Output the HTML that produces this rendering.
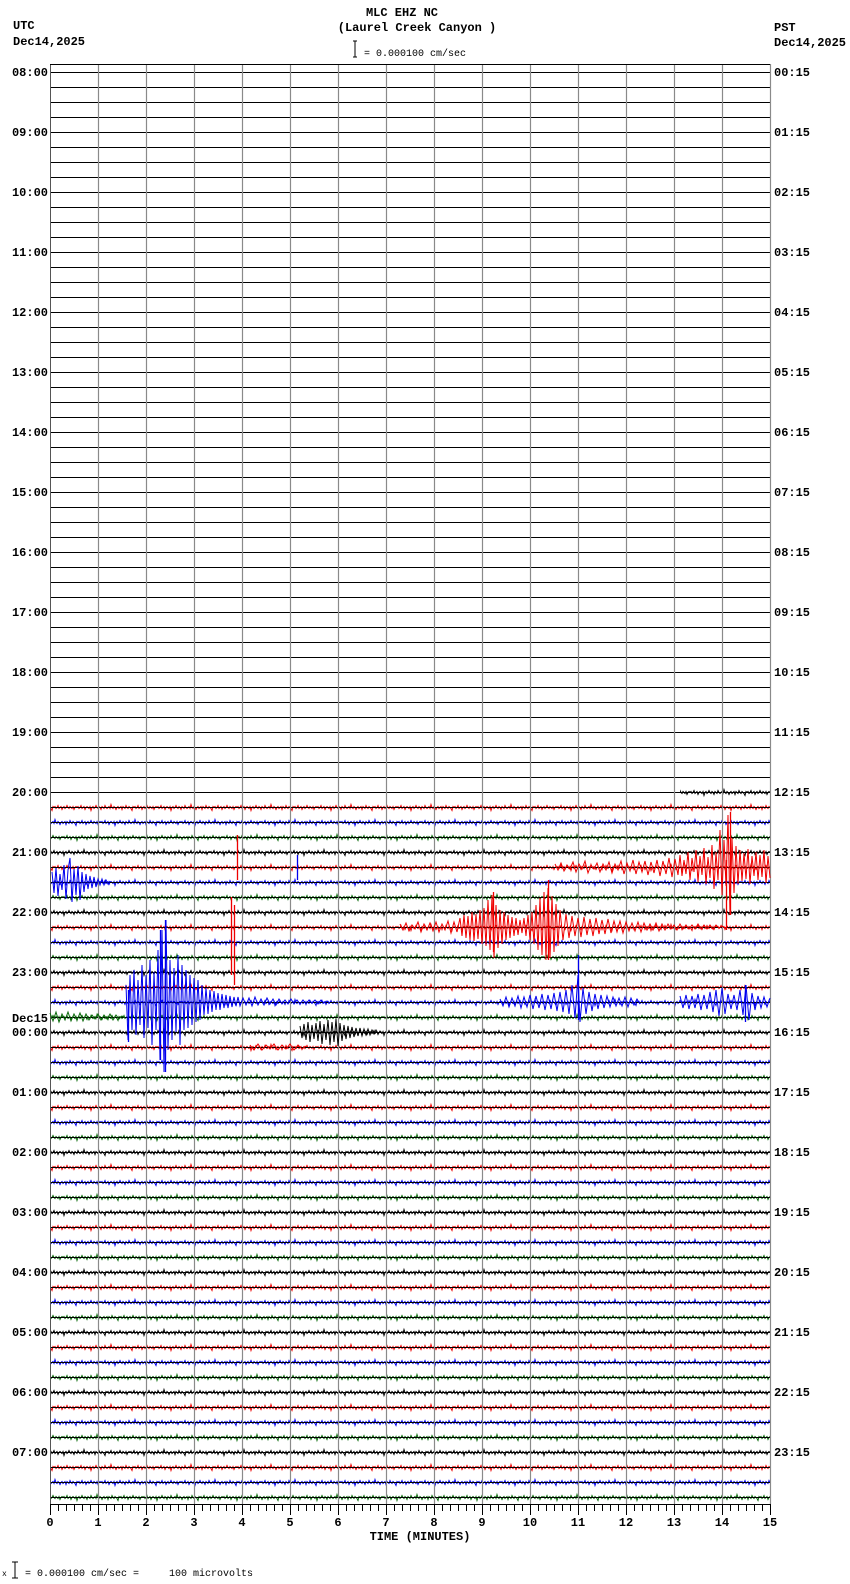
<!DOCTYPE html>
<html><head><meta charset="utf-8">
<style>
html,body{margin:0;padding:0;background:#fff;}
svg{display:block;}
text{font-family:"Liberation Mono",monospace;}
.b{font-weight:bold;font-size:12px;}
.s{font-size:10px;}
</style></head>
<body>
<svg width="850" height="1584" viewBox="0 0 850 1584" xmlns="http://www.w3.org/2000/svg" xmlns:xlink="http://www.w3.org/1999/xlink">
<defs>
<polyline id="nz" fill="none" points="0,0 1,-1 2,1 3,0 4,-2 5,1 6,0 7,-1 8,2 9,0 10,-1 11,0 12,1 13,-1 14,3 15,0 16,-1 17,1 18,0 19,-2 20,0 21,1 22,-1 23,0 24,2 25,-1 26,0 27,1 28,-2 29,0 30,1 31,0 32,-1 33,1 34,-3 35,0 36,1 37,-1 38,0 39,2 40,0 41,-1 42,1 43,0 44,-1 45,2 46,-1 47,0 48,1 49,-2 50,0 51,1 52,-1 53,0 54,1 55,3 56,-1 57,0 58,-1 59,1 60,0 61,-2 62,1 63,0 64,-1 65,2 66,0 67,-1 68,1 69,0 70,-2 71,0 72,1 73,-1 74,0 75,1 76,-1 77,2 78,0 79,-1 80,0"/>
<pattern id="hl" x="0" y="65" width="40" height="15" patternUnits="userSpaceOnUse">
<rect x="0" y="7" width="40" height="1" fill="#000"/>
</pattern>
<pattern id="nzp" x="50" y="65" width="80" height="60" patternUnits="userSpaceOnUse">
<g stroke-width="1">
<use xlink:href="#nz" href="#nz" x="0" y="7.5" stroke="#000"/>
<use xlink:href="#nz" href="#nz" x="27" y="22.5" stroke="#e00"/>
<use xlink:href="#nz" href="#nz" x="-53" y="22.5" stroke="#e00"/>
<use xlink:href="#nz" href="#nz" x="51" y="37.5" stroke="#00e"/>
<use xlink:href="#nz" href="#nz" x="-29" y="37.5" stroke="#00e"/>
<use xlink:href="#nz" href="#nz" x="13" y="52.5" stroke="#0a6a0a"/>
<use xlink:href="#nz" href="#nz" x="-67" y="52.5" stroke="#0a6a0a"/>
</g>
</pattern>
<pattern id="tk" x="50" y="1504" width="8" height="20" patternUnits="userSpaceOnUse">
<rect x="0" y="0" width="1" height="7" fill="#000"/>
</pattern>
<pattern id="tkm" x="50" y="1504" width="48" height="20" patternUnits="userSpaceOnUse">
<rect x="0" y="0" width="1" height="11" fill="#000"/>
</pattern>
</defs>
<rect width="850" height="1584" fill="#fff"/>

<!-- noise traces -->
<rect x="680" y="785" width="90" height="15" fill="url(#nzp)"/>
<rect x="50" y="800" width="720" height="705" fill="url(#nzp)"/>
<rect x="50" y="784" width="630" height="15" fill="#fff"/>
<!-- baselines -->
<rect x="50" y="65" width="720" height="1440" fill="url(#hl)"/>

<!-- grid -->
<g stroke="#8a8a8a" stroke-width="1.2">
<path d="M98.5 64V1504M146.5 64V1504M194.5 64V1504M242.5 64V1504M290.5 64V1504M338.5 64V1504M386.5 64V1504M434.5 64V1504M482.5 64V1504M530.5 64V1504M578.5 64V1504M626.5 64V1504M674.5 64V1504M722.5 64V1504M770.5 64V1504"/>
</g>
<path d="M50.5 64V1504" stroke="#555"/>
<path d="M50 64.5H770" stroke="#000"/>
<path d="M50 1504.5H771" stroke="#000"/>
<rect x="50" y="1504" width="721" height="8" fill="url(#tk)"/>
<rect x="50" y="1504" width="721" height="12" fill="url(#tkm)"/>

<!-- events -->
<g fill="none" stroke-width="1">
<polyline stroke="#e00" points="555,864 558,870 561,863 564,871 567,865 570,869 573,862 576,872 579,864 582,869 585,861 588,873 591,865 594,869 597,863 600,872 603,864 606,870 609,862 612,873 615,864 618,870 621,861 624,874 627,863 630,871 633,860 636,874 639,862 642,872 645,861 648,875 651,862 654,873 657,860 660,876 663,861 666,874 669,858 672,877 675,859 678,875 680,855 682,876 684,860 686,874 688,852 690,880 692,858 694,872 696,850 698,882 700,856 702,875 704,848 706,884 708,857 710,878 712,845 714,889 716,852 718,880 720,830 722,895 724,840 726,886 728,815 730,915 732,838 734,893 736,846 738,884 740,850 742,881 744,853 746,879 748,849 750,884 752,856 754,876 756,852 758,880 760,855 762,877 764,850 766,883 768,856 770,878"/>
<polyline stroke="#00e" points="52,872 54,893 56,868 58,896 60,874 62,890 64,865 66,899 68,870 70,858 72,902 74,869 76,895 78,866 80,900 82,872 84,892 86,874 88,889 90,876 92,888 94,877 96,887 98,879 100,885 102,879 104,885 106,880 108,884 110,881"/>
<polyline stroke="#e00" points="400,924 403,930 406,923 409,931 412,925 415,929 418,922 421,932 424,924 427,930 430,923 433,931 436,922 439,932 442,924 445,930 448,921 451,933 454,922 457,932 460,918 462,936 464,915 466,938 468,916 470,940 472,912 474,941 476,914 478,939 480,910 482,944 484,908 486,946 488,900 490,950 492,895 494,958 496,905 498,948 500,910 502,944 504,912 506,940 508,915 510,938 512,917 514,936 516,918 518,935 520,920 522,933 524,918 526,936 528,915 530,940 532,912 534,944 536,905 538,950 540,898 542,955 544,892 546,960 548,888 550,958 552,896 554,952 556,904 558,946 560,910 563,940 566,914 569,938 572,916 575,936 578,918 581,937 584,917 587,935 590,919 593,936 596,918 599,934 602,920 605,934 608,919 611,933 614,921 617,932 620,921 623,933 626,922 629,931 632,923 635,931 638,922 641,932 644,923 647,930 650,924 653,930 656,923 659,931 662,924 665,930 668,924 671,929 674,925 677,930 680,924 683,929 686,925 689,929 692,925 695,929 698,924 701,929 704,925 707,929 710,925 713,929 716,925 719,928 722,926 725,928 728,926"/>
<polyline stroke="#00e" points="126,985 128,1040 130,975 132,1030 134,970 136,1035 138,980 140,1025 142,965 144,1038 146,975 148,1028 150,960 152,1045 154,972 156,1030 158,950 160,1060 162,930 164,1072 166,920 168,1050 170,960 172,1040 174,968 176,1032 178,955 180,1045 182,965 184,1030 186,970 188,1028 190,975 192,1025 194,978 196,1022 198,980 200,1020 202,985 204,1015 206,988 208,1014 210,990 212,1012 214,991 216,1010 218,993 220,1010 222,994 224,1008 226,995 228,1008 230,996 232,1007 234,997 236,1006 238,997 240,1006 243,998 246,1005 249,998 252,1006 255,997 258,1005 261,999 264,1005 267,998 270,1004 273,999 276,1005 279,999 282,1004 285,1000 288,1004 291,999 294,1004 297,1000 300,1004 303,1000 306,1004 309,1000 312,1003 315,1000 318,1004 321,1000 324,1003 327,1001 330,1003"/>
<polyline stroke="#00e" points="500,999 503,1006 506,997 509,1007 512,998 515,1006 518,996 521,1008 524,997 527,1007 530,995 533,1009 536,996 539,1008 542,994 545,1010 548,995 551,1009 554,993 557,1011 560,992 563,1012 566,990 569,1014 572,985 575,1018 578,975 580,1022 583,988 586,1014 589,992 592,1011 595,994 598,1009 601,995 604,1008 607,996 610,1007 613,997 616,1006 619,998 622,1006 625,997 628,1007 631,998 634,1005 637,999 640,1004"/>
<polyline stroke="#00e" points="680,996 683,1008 686,995 689,1009 692,996 695,1008 698,994 701,1010 704,995 707,1009 710,992 713,1012 716,990 719,1016 722,988 725,1014 728,994 731,1009 734,995 737,1010 740,990 743,1015 746,985 749,1020 752,993 755,1010 758,996 761,1008 764,997 767,1007 770,998"/>
<polyline stroke="#000" points="300,1026 302,1038 304,1024 306,1040 308,1022 310,1042 312,1025 314,1039 316,1023 318,1041 320,1021 322,1044 324,1024 326,1040 328,1020 330,1045 332,1022 334,1042 336,1019 338,1046 340,1023 342,1041 344,1025 346,1039 348,1026 350,1038 352,1027 354,1037 356,1028 358,1036 360,1028 362,1036 364,1029 366,1035 368,1029 370,1035 372,1030 374,1034 376,1030 378,1034 380,1031 382,1033"/>
<polyline stroke="#0a6a0a" points="50,1013 53,1021 56,1012 59,1022 62,1014 65,1020 68,1012 71,1021 74,1014 77,1020 80,1013 83,1021 86,1014 89,1020 92,1015 95,1019 98,1014 101,1020 104,1015 107,1019 110,1014 113,1020 116,1015 119,1019 122,1016 125,1018"/>
<polyline stroke="#e00" points="250,1045 254,1050 258,1044 262,1050 266,1045 270,1049 274,1044 278,1050 282,1045 286,1049 290,1044 294,1050 298,1045 302,1049 306,1046"/>
</g>
<g stroke-width="1.3">
<path d="M237.5 835V880M231.5 897V975M234.5 905V985M730.5 812V915M726.5 860V930M548.5 880V960M493.5 892V952" stroke="#e00"/>
<path d="M297.5 855V880M165.5 920V1072M160.5 930V1060M128.5 990V1042M578.5 955V1020M745.5 985V1022" stroke="#00e"/>
</g>

<!-- labels -->
<g text-anchor="end">
<text x="48" y="76" class="b">08:00</text><text x="48" y="136" class="b">09:00</text><text x="48" y="196" class="b">10:00</text><text x="48" y="256" class="b">11:00</text><text x="48" y="316" class="b">12:00</text><text x="48" y="376" class="b">13:00</text><text x="48" y="436" class="b">14:00</text><text x="48" y="496" class="b">15:00</text><text x="48" y="556" class="b">16:00</text><text x="48" y="616" class="b">17:00</text><text x="48" y="676" class="b">18:00</text><text x="48" y="736" class="b">19:00</text><text x="48" y="796" class="b">20:00</text><text x="48" y="856" class="b">21:00</text><text x="48" y="916" class="b">22:00</text><text x="48" y="976" class="b">23:00</text><text x="48" y="1022" class="b">Dec15</text><text x="48" y="1036" class="b">00:00</text><text x="48" y="1096" class="b">01:00</text><text x="48" y="1156" class="b">02:00</text><text x="48" y="1216" class="b">03:00</text><text x="48" y="1276" class="b">04:00</text><text x="48" y="1336" class="b">05:00</text><text x="48" y="1396" class="b">06:00</text><text x="48" y="1456" class="b">07:00</text>
</g>
<g>
<text x="774" y="76" class="b">00:15</text><text x="774" y="136" class="b">01:15</text><text x="774" y="196" class="b">02:15</text><text x="774" y="256" class="b">03:15</text><text x="774" y="316" class="b">04:15</text><text x="774" y="376" class="b">05:15</text><text x="774" y="436" class="b">06:15</text><text x="774" y="496" class="b">07:15</text><text x="774" y="556" class="b">08:15</text><text x="774" y="616" class="b">09:15</text><text x="774" y="676" class="b">10:15</text><text x="774" y="736" class="b">11:15</text><text x="774" y="796" class="b">12:15</text><text x="774" y="856" class="b">13:15</text><text x="774" y="916" class="b">14:15</text><text x="774" y="976" class="b">15:15</text><text x="774" y="1036" class="b">16:15</text><text x="774" y="1096" class="b">17:15</text><text x="774" y="1156" class="b">18:15</text><text x="774" y="1216" class="b">19:15</text><text x="774" y="1276" class="b">20:15</text><text x="774" y="1336" class="b">21:15</text><text x="774" y="1396" class="b">22:15</text><text x="774" y="1456" class="b">23:15</text>
</g>
<g text-anchor="middle">
<text x="50" y="1526" class="b">0</text><text x="98" y="1526" class="b">1</text><text x="146" y="1526" class="b">2</text><text x="194" y="1526" class="b">3</text><text x="242" y="1526" class="b">4</text><text x="290" y="1526" class="b">5</text><text x="338" y="1526" class="b">6</text><text x="386" y="1526" class="b">7</text><text x="434" y="1526" class="b">8</text><text x="482" y="1526" class="b">9</text><text x="530" y="1526" class="b">10</text><text x="578" y="1526" class="b">11</text><text x="626" y="1526" class="b">12</text><text x="674" y="1526" class="b">13</text><text x="722" y="1526" class="b">14</text><text x="770" y="1526" class="b">15</text>
</g>

<text x="402" y="16" class="b" text-anchor="middle">MLC EHZ NC</text>
<text x="417" y="31" class="b" text-anchor="middle">(Laurel Creek Canyon )</text>
<path d="M353 41H357M355 41V57M353 57H357" stroke="#000" fill="none"/>
<text x="364" y="56" class="s">= 0.000100 cm/sec</text>
<text x="13" y="29" class="b">UTC</text>
<text x="13" y="45" class="b">Dec14,2025</text>
<text x="774" y="31" class="b">PST</text>
<text x="774" y="46" class="b">Dec14,2025</text>
<text x="420" y="1540" class="b" text-anchor="middle">TIME (MINUTES)</text>
<text x="2" y="1576" style="font-size:8px">x</text>
<path d="M12 1562H18M15 1562V1578M12 1578H18" stroke="#000" fill="none"/>
<text x="25" y="1576" class="s" xml:space="preserve">= 0.000100 cm/sec =     100 microvolts</text>
</svg>
</body></html>
